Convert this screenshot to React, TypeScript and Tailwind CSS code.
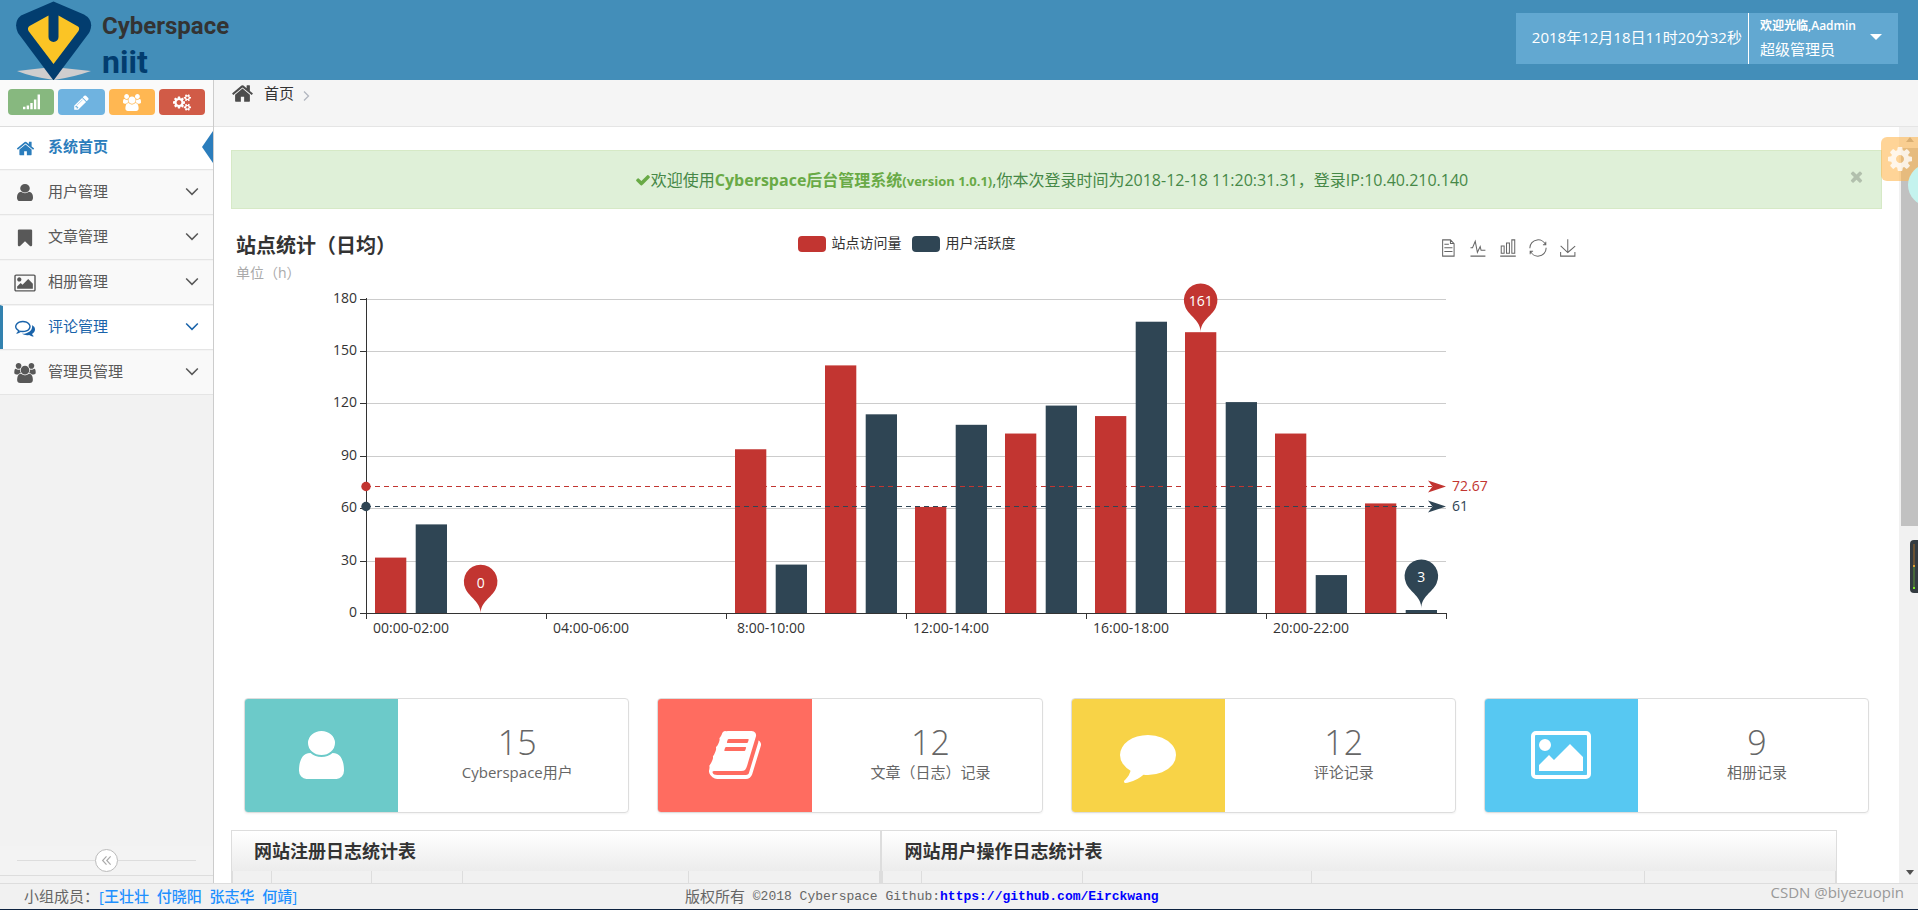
import React from "react";

type IconProps = { className?: string; d: string; box?: string; stretch?: boolean };

function Icon({ className, d, box = "0 0 1792 1792", stretch = false }: IconProps) {
  return (
    <svg viewBox={box} className={className} fill="currentColor" preserveAspectRatio={stretch ? "none" : undefined} aria-hidden="true">
      <path d={d} />
    </svg>
  );
}

const WIDE = "-64 0 1920 1792";
const TIGHT = "256 128 1280 1536";

const home =
  "M1472 992v480q0 26-19 45t-45 19h-384v-384h-256v384h-384q-26 0-45-19t-19-45v-480q0-1 .5-3t.5-3l575-474 575 474q1 2 1 6zm223-69l-62 74q-8 9-21 11h-3q-13 0-21-7l-692-577-692 577q-12 8-24 7-13-2-21-11l-62-74q-8-10-7-23.5t11-21.5l719-599q32-26 76-26t76 26l244 204v-195q0-14 9-23t23-9h192q14 0 23 9t9 23v408l219 182q10 8 11 21.5t-7 23.5z";
const user =
  "M1536 1399q0 109-62.5 187t-150.5 78h-854q-88 0-150.5-78t-62.5-187q0-85 8.5-160.5t31.5-152 58.5-131 94-89 134.5-34.5q131 128 313 128t313-128q76 0 134.5 34.5t94 89 58.5 131 31.5 152 8.5 160.5zm-256-887q0 159-112.5 271.5t-271.5 112.5-271.5-112.5-112.5-271.5 112.5-271.5 271.5-112.5 271.5 112.5 112.5 271.5z";
const bookmark =
  "M1420 128q23 0 44 9 33 13 52.5 41t19.5 62v1289q0 34-19.5 62t-52.5 41q-19 8-44 8-48 0-83-32l-441-424-441 424q-36 33-83 33-23 0-44-9-33-13-52.5-41t-19.5-62v-1289q0-34 19.5-62t52.5-41q21-9 44-9h1048z";
const picture =
  "M576 576q0 80-56 136t-136 56-136-56-56-136 56-136 136-56 136 56 56 136zm1024 384v448h-1408v-192l320-320 160 160 512-512zm96-704h-1600q-13 0-22.5 9.5t-9.5 22.5v1216q0 13 9.5 22.5t22.5 9.5h1600q13 0 22.5-9.5t9.5-22.5v-1216q0-13-9.5-22.5t-22.5-9.5zm160 32v1216q0 66-47 113t-113 47h-1600q-66 0-113-47t-47-113v-1216q0-66 47-113t113-47h1600q66 0 113 47t47 113z";
const comments =
  "M704 384q-153 0-286 52t-211.5 141-78.5 191q0 82 53 158t149 132l97 56-35 84q34-20 62-39l44-31 53 10q78 14 153 14 153 0 286-52t211.5-141 78.5-191-78.5-191-211.5-141-286-52zm0-128q191 0 353.5 68.5t256.5 186.5 94 257-94 257-256.5 186.5-353.5 68.5q-86 0-176-16-124 88-278 128-36 9-86 16h-3q-11 0-20.5-8t-11.5-21q-1-3-1-6.5t.5-6.5 2-6l2.5-5 3.5-5.5 4-5 4.5-5 4-4.5q5-6 23-25t26-29.5 22.5-29 25-38.5 20.5-44q-124-72-195-177t-71-224q0-139 94-257t256.5-186.5 353.5-68.5zm822 1169q10 24 20.5 44t25 38.5 22.5 29 26 29.5 23 25q1 1 4 4.5t4.5 5 4 5 3.5 5.5l2.5 5 2 6 .5 6.5-1 6.5q-3 14-13 22t-22 7q-50-7-86-16-154-40-278-128-90 16-176 16-271 0-472-132 58 4 88 4 161 0 309-45t264-129q125-92 192-212t67-254q0-77-23-152 129 71 204 178t75 230q0 120-71 224.5t-195 176.5z";
const group =
  "M529 896q-162 5-265 128h-134q-82 0-138-40.5t-56-118.5q0-353 124-353 6 0 43.5 21t97.5 42.5 119 21.5q67 0 133-23-5 37-5 66 0 139 81 256zm1071 637q0 120-73 189.5t-194 69.5h-874q-121 0-194-69.5t-73-189.5q0-53 3.5-103.5t14-109 26.5-108.5 43-97.5 62-81 85.5-53.5 111.5-20q10 0 43 21.5t73 48 107 48 135 21.5 135-21.5 107-48 73-48 43-21.5q61 0 111.5 20t85.5 53.5 62 81 43 97.5 26.5 108.5 14 109 3.5 103.5zm-1024-1277q0 106-75 181t-181 75-181-75-75-181 75-181 181-75 181 75 75 181zm704 384q0 159-112.5 271.5t-271.5 112.5-271.5-112.5-112.5-271.5 112.5-271.5 271.5-112.5 271.5 112.5 112.5 271.5zm576 225q0 78-56 118.5t-138 40.5h-134q-103-123-265-128 81-117 81-256 0-29-5-66 66 23 133 23 59 0 119-21.5t97.5-42.5 43.5-21q124 0 124 353zm-128-609q0 106-75 181t-181 75-181-75-75-181 75-181 181-75 181 75 75 181z";
const pencil =
  "M491 1536l91-91-235-235-91 91v107h128v128h107zm523-928q0-22-22-22-10 0-17 7l-542 542q-7 7-7 17 0 22 22 22 10 0 17-7l542-542q7-7 7-17zm-54-192l416 416-832 832h-416v-416zm683 96q0 53-37 90l-166 166-416-416 166-165q36-38 90-38 53 0 91 38l235 234q37 39 37 91z";
const cogs =
  "M896 896q0-106-75-181t-181-75-181 75-75 181 75 181 181 75 181-75 75-181zm768 512q0-52-38-90t-90-38-90 38-38 90q0 53 37.5 90.5t90.5 37.5 90.5-37.5 37.5-90.5zm0-1024q0-52-38-90t-90-38-90 38-38 90q0 53 37.5 90.5t90.5 37.5 90.5-37.5 37.5-90.5zm-384 421v185q0 10-7 19.5t-16 10.5l-155 24q-11 35-32 76 34 48 90 115 7 11 7 20 0 12-7 19-23 30-82.5 89.5t-78.5 59.5q-11 0-21-7l-115-90q-37 19-77 31-11 108-23 155-7 24-30 24h-186q-11 0-20-7.5t-10-17.5l-23-153q-34-10-75-31l-118 89q-7 7-20 7-11 0-21-8-144-133-144-160 0-9 7-19 10-14 41-53t47-61q-23-44-35-82l-152-24q-10-1-17-9.5t-7-19.5v-185q0-10 7-19.5t16-10.5l155-24q11-35 32-76-34-48-90-115-7-11-7-20 0-12 7-20 22-30 82-89t79-59q11 0 21 7l115 90q34-18 77-32 11-108 23-154 7-24 30-24h186q11 0 20 7.5t10 17.5l23 153q34 10 75 31l118-89q8-7 20-7 11 0 21 8 144 133 144 160 0 8-7 19-12 16-42 54t-45 60q23 48 34 82l152 23q10 2 17 10.5t7 19.5zm640 533v140q0 16-149 31-12 27-30 52 51 113 51 138 0 4-4 7-122 71-124 71-8 0-46-47t-52-68q-20 2-30 2t-30-2q-14 21-52 68t-46 47q-2 0-124-71-4-3-4-7 0-25 51-138-18-25-30-52-149-15-149-31v-140q0-16 149-31 13-29 30-52-51-113-51-138 0-4 4-7 4-2 35-20t59-34 30-16q8 0 46 46.5t52 67.5q20-2 30-2t30 2q51-71 92-112l6-2q4 0 124 70 4 3 4 7 0 25-51 138 17 23 30 52 149 15 149 31zm0-1024v140q0 16-149 31-12 27-30 52 51 113 51 138 0 4-4 7-122 71-124 71-8 0-46-47t-52-68q-20 2-30 2t-30-2q-14 21-52 68t-46 47q-2 0-124-71-4-3-4-7 0-25 51-138-18-25-30-52-149-15-149-31v-140q0-16 149-31 13-29 30-52-51-113-51-138 0-4 4-7 4-2 35-20t59-34 30-16q8 0 46 46.5t52 67.5q20-2 30-2t30 2q51-71 92-112l6-2q4 0 124 70 4 3 4 7 0 25-51 138 17 23 30 52 149 15 149 31z";
const cog =
  "M1152 896q0-106-75-181t-181-75-181 75-75 181 75 181 181 75 181-75 75-181zm512-109v222q0 12-8 23t-20 13l-185 28q-19 54-39 91 35 50 107 138 10 12 10 25t-9 23q-27 37-99 108t-94 71q-12 0-26-9l-138-108q-44 23-91 38-16 136-29 186-7 28-36 28h-222q-14 0-24.5-8.5t-11.5-21.5l-28-184q-49-16-90-37l-141 107q-10 9-25 9-14 0-25-11-126-114-165-168-7-10-7-23 0-12 8-23 15-21 51-66.5t54-70.5q-27-50-41-99l-183-27q-13-2-21-12.5t-8-23.5v-222q0-12 8-23t19-13l186-28q14-46 39-92-40-57-107-138-10-12-10-24 0-10 9-23 26-36 98.5-107.5t94.5-71.5q13 0 26 10l138 107q44-23 91-38 16-136 29-186 7-28 36-28h222q14 0 24.5 8.5t11.5 21.5l28 184q49 16 90 37l142-107q9-9 24-9 13 0 25 10 129 119 165 170 7 8 7 22 0 12-8 23-15 21-51 66.5t-54 70.5q26 50 41 98l183 28q13 2 21 12.5t8 23.5z";
const book =
  "M1703 478q40 57 18 129l-275 906q-19 64-76.5 107.5t-122.5 43.5h-923q-77 0-148.5-53.5t-99.5-131.5q-24-67-2-127 0-4 3-27t4-37q1-8-3-21.5t-3-19.5q2-11 8-21t16.5-23.5 16.5-23.5q23-38 45-91.5t30-91.5q3-10 .5-30t-.5-28q3-11 17-28t17-23q21-36 42-92t25-90q1-9-2.5-32t.5-28q4-13 22-30.5t22-22.5q19-26 42.5-84.5t27.5-96.5q1-8-3-25.5t-2-26.5q2-8 9-18t18-23 17-21q8-12 16.5-30.5t15-35 16-36 19.5-32 26.5-23.5 36-11.5 47.5 5.5l-1 3q38-9 51-9h761q74 0 114 56t18 130l-274 906q-36 119-71.5 153.5t-128.5 34.5h-869q-27 0-38 15-11 16-1 43 24 70 144 70h923q29 0 56-15.5t35-41.5l300-987q7-22 5-57 38 15 59 43zm-1064 2q-4 13 2 22.5t20 9.5h608q13 0 25.5-9.5t16.5-22.5l21-64q4-13-2-22.5t-20-9.5h-608q-13 0-25.5 9.5t-16.5 22.5zm-83 256q-4 13 2 22.5t20 9.5h608q13 0 25.5-9.5t16.5-22.5l21-64q4-13-2-22.5t-20-9.5h-608q-13 0-25.5 9.5t-16.5 22.5z";
const comment =
  "M1792 896q0 174-120 321.5t-326 233-450 85.5q-70 0-145-8-198 175-460 242-49 14-114 22-17 2-30.5-9t-17.5-29v-1q-3-4-.5-12t2-10 4.5-9.5l6-9 7-8.5 8-9q7-8 31-34.5t34.5-38 31-39.5 32.5-51 27-59 26-76q-157-89-247.5-220t-90.5-281q0-130 71-248.5t191-204.5 286-136.5 348-50.5q244 0 450 85.5t326 233 120 321.5z";
const check =
  "M1671 566q0 40-28 68l-724 724-136 136q-28 28-68 28t-68-28l-136-136-362-362q-28-28-28-68t28-68l136-136q28-28 68-28t68 28l294 295 656-657q28-28 68-28t68 28l136 136q28 28 28 68z";
const times =
  "M1490 1322q0 40-28 68l-136 136q-28 28-68 28t-68-28l-294-294-294 294q-28 28-68 28t-68-28l-136-136q-28-28-28-68t28-68l294-294-294-294q-28-28-28-68t28-68l136-136q28-28 68-28t68 28l294 294 294-294q28-28 68-28t68 28l136 136q28 28 28 68t-28 68l-294 294 294 294q28 28 28 68z";
const signal =
  "M0 1344h256v256h-256zM384 1216h256v384h-256zM768 960h256v640h-256zM1152 576h256v1024h-256zM1536 64h256v1536h-256z";

function Angle({ className, d }: { className: string; d: string }) {
  return (
    <svg viewBox="0 0 12 12" className={className} fill="none" stroke="currentColor" strokeWidth="1.3" aria-hidden="true">
      <path d={d} />
    </svg>
  );
}

function Logo() {
  return (
    <a href="#" className="flex gap-2.5 pl-4">
      <svg viewBox="16 0 76 80" className="h-20 w-[76px]" aria-hidden="true">
        <path d="M17 71 Q34 69 53 67 Q72 69 91 71 Q74 77 54 80 Q32 77 17 71Z" fill="#cfcdce" />
        <path d="M53.500 1.500 L84 14.500 Q94 20 90 31 L89 33 L53.500 80.500 L18 33 Q13 22 21 15.500Z" fill="#023d6f" />
        <path d="M48.500 15.500 L29.500 26 Q27 28 28.500 31 L53.500 64 L78.500 31 Q80 28 78 26.500 L58.500 15.500 V37 A5 5 0 0 1 48.500 37Z" fill="#fbc425" />
      </svg>
      <span className="flex flex-col pt-3 font-['Roboto',sans-serif] font-bold">
        <span className="text-2xl leading-7 text-[#333]">Cyberspace</span>
        <span className="text-[32px] leading-[44px] text-[#023d6f]">niit</span>
      </span>
    </a>
  );
}

function Header() {
  return (
    <header className="flex h-20 shrink-0 items-start justify-between bg-[#438eb9] pr-5">
      <Logo />
      <div className="mt-[13px] flex h-[51px] bg-[#62a8d1] text-white">
        <time className="flex items-center pr-1.5 pb-0.5 pl-4 text-[15px]">2018年12月18日11时20分32秒</time>
        <button type="button" className="flex items-center gap-3.5 border-l border-white pr-4 pl-[11px] text-left">
          <span className="flex flex-col pb-1">
            <span className="text-xs leading-6 font-semibold">欢迎光临,Aadmin</span>
            <span className="text-[15px] leading-[22px]">超级管理员</span>
          </span>
          <svg viewBox="0 0 12 6" className="mb-1 h-[6px] w-3" fill="currentColor" aria-hidden="true">
            <path d="M0 0h12L6 6z" />
          </svg>
        </button>
      </div>
    </header>
  );
}

const menu = [
  { label: "用户管理", icon: <Icon d={user} box={TIGHT} stretch className="h-[17px] w-4" /> },
  { label: "文章管理", icon: <Icon d={bookmark} className="size-5" /> },
  { label: "相册管理", icon: <Icon d={picture} box={WIDE} className="h-5 w-[22px]" /> },
  { label: "评论管理", icon: <Icon d={comments} className="size-5" />, hover: true },
  { label: "管理员管理", icon: <Icon d={group} box={WIDE} className="h-5 w-[22px]" /> },
];

function Sidebar() {
  return (
    <aside className="flex w-[214px] shrink-0 flex-col border-r border-[#ccc] bg-[#f2f2f2]">
      <div className="flex h-[47px] shrink-0 items-start gap-1 border-b border-[#ddd] bg-[#fafafa] px-2 pt-[9px] text-white">
        <button type="button" aria-label="统计" className="flex h-[26px] flex-1 items-center justify-center rounded bg-[#87b87f]">
          <Icon d={signal} className="size-[17px]" />
        </button>
        <button type="button" aria-label="编辑" className="flex h-[26px] flex-1 items-center justify-center rounded bg-[#6fb3e0]">
          <Icon d={pencil} className="size-[17px]" />
        </button>
        <button type="button" aria-label="用户" className="flex h-[26px] flex-1 items-center justify-center rounded bg-[#ffb752]">
          <Icon d={group} box={WIDE} className="h-[17px] w-[18px]" />
        </button>
        <button type="button" aria-label="设置" className="flex h-[26px] flex-1 items-center justify-center rounded bg-[#d15b47]">
          <Icon d={cogs} box="0 0 1920 1792" className="h-[17px] w-[18px]" />
        </button>
      </div>
      <nav>
        <ul className="text-[15px]">
          <li className="border-b border-[#e5e5e5] bg-white">
            <a href="#" className="relative flex h-[42px] items-center pl-3.5 font-bold text-[#2b7dbc]">
              <span className="flex w-[22px] justify-center">
                <Icon d={home} className="size-[19px]" />
              </span>
              <span className="ml-3 pb-1">系统首页</span>
              <svg viewBox="0 0 11 32" className="absolute top-1 right-0 h-8 w-[11px]" fill="#2b7dbc" aria-hidden="true">
                <path d="M11 0v32L0 16z" />
              </svg>
            </a>
          </li>
          {menu.map((m) => (
            <li key={m.label} className={m.hover ? "border-b border-[#e5e5e5] bg-white" : "border-b border-[#e5e5e5] bg-[#f9f9f9]"}>
              <a
                href="#"
                className={
                  m.hover
                    ? "flex h-11 items-center border-t border-l-[3px] border-t-[#f4f4f4] border-l-[#3382af] pr-3.5 pl-[11px] text-[#1963aa]"
                    : "flex h-11 items-center border-t border-[#f4f4f4] pr-3.5 pl-3.5 text-[#585858]"
                }
              >
                <span className="flex w-[22px] justify-center">{m.icon}</span>
                <span className="ml-3 flex-1 pb-0.5">{m.label}</span>
                <Angle d="M1 3l5 5 5-5" className="mb-0.5 size-3.5" />
              </a>
            </li>
          ))}
        </ul>
      </nav>
      <div className="mt-auto flex h-[30px] items-center border-b border-[#ddd] bg-[#f3f3f3] px-[17px]">
        <span className="h-px flex-1 bg-[#ddd]" />
        <button type="button" aria-label="收起菜单" className="flex size-[23px] items-center justify-center rounded-full border border-[#bbb] bg-white text-[#aaa]">
          <Angle d="M6 1.500L1.800 6 6 10.500M10.500 1.500L6.300 6l4.200 4.500" className="size-[11px]" />
        </button>
        <span className="h-px flex-1 bg-[#ddd]" />
      </div>
      <div className="h-[7px] shrink-0" />
    </aside>
  );
}

const visits = [32, 0, 0, 0, 94, 142, 61, 103, 113, 161, 103, 63];
const active = [51, 0, 0, 0, 28, 114, 108, 119, 167, 121, 22, 2];
const periods = ["00:00-02:00", "04:00-06:00", "8:00-10:00", "12:00-14:00", "16:00-18:00", "20:00-22:00"];
const RED = "#c23531";
const NAVY = "#2f4554";

const LEFT = 135;
const RIGHT = 1215;
const BASE = 330.5;
const UNIT = 314.5 / 180;
const STEP = 90;
const BAR = 31.3;
const barX = (i: number, s: number) => LEFT + STEP * i + 9 + s * (BAR + 9.4);
const yOf = (v: number) => BASE - v * UNIT;
const lineY = (v: number) => Math.floor(yOf(v)) + 0.5;

function Pin({ x, y, color, label }: { x: number; y: number; color: string; label: string }) {
  return (
    <g transform={`translate(${x} ${y})`}>
      <path d="M-15.180 -24.800A16.800 16.800 0 1 1 15.180 -24.800C10.860 -15.700 0 -11.760 0 0C0 -11.760 -10.860 -15.700 -15.180 -24.800Z" fill={color} />
      <text y="-26" textAnchor="middle" fill="#fff">
        {label}
      </text>
    </g>
  );
}

function AverageLine({ value, color, label }: { value: number; color: string; label: string }) {
  const y = lineY(value);
  return (
    <g>
      <line x1={LEFT} x2={RIGHT - 14} y1={y} y2={y} stroke={color} strokeDasharray="5 4" />
      <circle cx={LEFT} cy={y} r="4.700" fill={color} />
      <path d={`M${RIGHT} ${y}l-18 -6 4.500 6 -4.500 6z`} fill={color} />
      <text x={RIGHT + 6} y={y + 4} fill={color}>
        {label}
      </text>
    </g>
  );
}

const tools = [
  { name: "数据视图", d: "M17.5,17.3H33M45.4,29.5h-28M11.5,2v56H51V14.8L38.4,2H11.5zM38.4,2.2v12.7H51M45.4,41.7h-28" },
  { name: "切换为折线图", d: "M4.1,28.9h7.1l9.3-22l7.4,38l9.7-19.7l3,12.8h14.9M4.1,58h51.4" },
  { name: "切换为柱状图", d: "M6.7,22.9h10V48h-10V22.9zM24.9,13h10v35h-10V13zM43.2,2h10v46h-10V2zM3.1,58h53.7" },
  { name: "还原", d: "M47,18.9h9.8V8.7M56.3,20.1C52.1,9,40.5,0.6,26.8,2.1C12.6,3.7,1.6,16.2,2.1,30.6M13,41.1H3.1v10.2M3.7,39.9c4.2,11.1,15.8,19.5,29.5,18c14.2-1.6,25.2-14.1,24.7-28.5" },
  { name: "保存为图片", d: "M4.7,22.9L29.3,45.5L54.7,23.4M4.6,43.6L4.6,58L53.8,58L53.8,43.6M29.2,45.1L29.2,0" },
];

function Chart() {
  return (
    <section className="w-full max-w-[1350px]">
      <div className="grid grid-cols-[1fr_auto_1fr] items-start pt-[23px] pr-1 pl-[5px]">
        <div>
          <h2 className="text-xl leading-7 font-bold text-[#333]">站点统计（日均）</h2>
          <p className="mt-[3px] text-sm leading-5 text-[#aaa]">单位（h）</p>
        </div>
        <div className="flex gap-2.5 text-sm leading-[22px] text-[#333]">
          <button type="button" className="flex items-center gap-1.5">
            <span className="mt-0.5 h-4 w-[28px] rounded bg-[#c23531]" />
            站点访问量
          </button>
          <button type="button" className="flex items-center gap-1.5">
            <span className="mt-0.5 h-4 w-[28px] rounded bg-[#2f4554]" />
            用户活跃度
          </button>
        </div>
        <div className="flex justify-end gap-3 pt-[7px]">
          {tools.map((t) => (
            <button key={t.name} type="button" aria-label={t.name}>
              <svg viewBox="-1 -1 62 62" className="size-[18px]" fill="none" stroke="#666" strokeWidth="3.500" aria-hidden="true">
                <path d={t.d} />
              </svg>
            </button>
          ))}
        </div>
      </div>
      <svg viewBox="0 0 1350 360" className="block w-full overflow-visible text-[14px]" fill="#333" role="img" aria-label="站点统计（日均）">
        {[0, 30, 60, 90, 120, 150, 180].map((v) => (
          <g key={v}>
            {v > 0 && <line x1={LEFT} x2={RIGHT} y1={lineY(v)} y2={lineY(v)} stroke="#ccc" />}
            <line x1={LEFT - 6} x2={LEFT} y1={lineY(v)} y2={lineY(v)} stroke="#333" />
            <text x={LEFT - 9} y={lineY(v) + 3} textAnchor="end">
              {v}
            </text>
          </g>
        ))}
        {visits.map((v, i) => (
          <rect key={i} x={barX(i, 0)} y={yOf(v)} width={BAR} height={v * UNIT} fill={RED} />
        ))}
        {active.map((v, i) => (
          <rect key={i} x={barX(i, 1)} y={yOf(v)} width={BAR} height={v * UNIT} fill={NAVY} />
        ))}
        <line x1={LEFT + 0.5} x2={LEFT + 0.5} y1="15" y2="331" stroke="#333" />
        <line x1={LEFT} x2={RIGHT + 1} y1={lineY(0)} y2={lineY(0)} stroke="#333" />
        {[0, 1, 2, 3, 4, 5, 6].map((t) => (
          <line key={t} x1={LEFT + 180 * t + 0.5} x2={LEFT + 180 * t + 0.5} y1="331" y2="336" stroke="#333" />
        ))}
        {periods.map((p, i) => (
          <text key={p} x={LEFT + 45 + 180 * i} y="350" textAnchor="middle">
            {p}
          </text>
        ))}
        <AverageLine value={72.67} color={RED} label="72.67" />
        <AverageLine value={61} color={NAVY} label="61" />
        <Pin x={barX(9, 0) + BAR / 2} y={yOf(161)} color={RED} label="161" />
        <Pin x={barX(1, 0) + BAR / 2} y={yOf(0)} color={RED} label="0" />
        <Pin x={barX(11, 1) + BAR / 2} y={yOf(3)} color={NAVY} label="3" />
      </svg>
    </section>
  );
}

const cards = [
  { value: 15, label: "Cyberspace用户", tone: "bg-[#6ccac9]", icon: <Icon d={user} box={TIGHT} stretch className="h-12 w-[45px]" /> },
  { value: 12, label: "文章（日志）记录", tone: "bg-[#ff6c60]", icon: <Icon d={book} className="size-14" /> },
  { value: 12, label: "评论记录", tone: "bg-[#f8d347]", icon: <Icon d={comment} className="size-14" /> },
  { value: 9, label: "相册记录", tone: "bg-[#57c8f2]", icon: <Icon d={picture} box={WIDE} className="h-14 w-[60px]" /> },
];

const panels = [
  { title: "网站注册日志统计表", box: "w-[40.5%]", cols: ["w-[6%]", "w-[15.5%]", "w-[14%]", "w-[35%]", "w-[29.5%]"] },
  { title: "网站用户操作日志统计表", box: "flex-1", cols: ["w-[4%]", "w-[17%]", "w-[24%]", "w-[35%]", "w-[20%]"] },
];

function Content() {
  return (
    <div className="min-w-0 flex-1 overflow-hidden bg-white px-[17px] pt-[23px]">
      <div role="alert" className="relative flex h-[59px] items-center justify-center border border-[#d6e9c6] bg-[#dff0d8] text-[#468847]">
        <p className="flex items-center pr-2.5 text-base">
          <Icon d={check} className="size-4 text-[#69aa46]" />
          <span>欢迎使用</span>
          <strong className="font-bold text-[#69aa46]">
            Cyberspace后台管理系统<small className="text-[13px]">(version 1.0.1)</small>
          </strong>
          <span>,你本次登录时间为2018-12-18 11:20:31.31，登录IP:10.40.210.140</span>
        </p>
        <button type="button" aria-label="关闭" className="absolute top-[17px] right-4 text-[#b2c0ad]">
          <Icon d={times} className="size-[17px]" />
        </button>
      </div>
      <Chart />
      <div className="mt-[55px] grid grid-cols-4 gap-7 px-[13px]">
        {cards.map((c) => (
          <section key={c.label} className="flex h-[115px] overflow-hidden rounded border border-[#ddd] shadow-xs">
            <div className={`flex w-2/5 items-center justify-center pb-0.5 text-white ${c.tone}`}>{c.icon}</div>
            <div className="flex w-3/5 flex-col items-center pt-[23px] pl-2 text-[#666]">
              <strong className="text-[34px] leading-10 font-light">{c.value}</strong>
              <p className="text-[15px] leading-5">{c.label}</p>
            </div>
          </section>
        ))}
      </div>
      <div className="mt-[17px] mr-[45px] flex">
        {panels.map((p) => (
          <section key={p.title} className={`border border-[#ddd] ${p.box}`}>
            <h3 className="flex h-10 items-center bg-linear-to-b from-white to-[#ececec] pl-[22px] text-lg font-bold text-[#333]">{p.title}</h3>
            <table className="w-full table-fixed border-collapse bg-[#f1f1f1]" aria-label={p.title}>
              <thead>
                <tr className="h-9">
                  {p.cols.map((w, i) => (
                    <th key={i} className={`border-x border-[#ddd] ${w}`} />
                  ))}
                </tr>
              </thead>
            </table>
          </section>
        ))}
      </div>
    </div>
  );
}

function Scrollbar() {
  return (
    <div className="relative flex w-[19px] shrink-0 flex-col items-end bg-[#f1f1f1]" aria-hidden="true">
      <span className="flex h-[21px] w-[17px] items-center justify-center">
        <svg viewBox="0 0 8 5" className="mt-1 h-[5px] w-2.5" fill="#a3a3a3">
          <path d="M0 5h8L4 0z" />
        </svg>
      </span>
      <span className="h-1/2 w-[17px] bg-[#c1c1c1]" />
      <span className="mt-auto flex h-[21px] w-[17px] items-center justify-center">
        <svg viewBox="0 0 8 5" className="h-[5px] w-2.5" fill="#505050">
          <path d="M0 0h8L4 5z" />
        </svg>
      </span>
    </div>
  );
}

export default function App() {
  return (
    <div className="relative flex h-screen flex-col overflow-hidden bg-white font-['Open_Sans','Noto_Sans_CJK_SC',sans-serif]">
      <Header />
      <div className="flex min-h-0 flex-1">
        <Sidebar />
        <main className="flex min-w-0 flex-1 flex-col">
          <nav aria-label="breadcrumb" className="flex h-[47px] shrink-0 items-start border-b border-[#e5e5e5] bg-[#f5f5f5] pt-0.5 pl-[17px] text-[15px] leading-[22px] text-[#333]">
            <Icon d={home} className="size-[23px] text-[#4c4c4c]" />
            <a href="#" className="ml-2.5">
              首页
            </a>
            <Angle d="M4 1.500L8.500 6 4 10.500" className="mt-2 ml-1.5 size-3 text-[#b2b6bf]" />
          </nav>
          <div className="flex min-h-0 flex-1">
            <Content />
            <Scrollbar />
          </div>
        </main>
      </div>
      <footer className="flex h-[27px] shrink-0 items-center border-t border-b border-t-[#ddd] border-b-[#0d2240] bg-[#f1f1f1] text-[15px] text-[#666]">
        <p className="w-[685px] pl-6">
          小组成员：
          <span className="font-medium whitespace-pre text-[#1e90ff]">[王壮壮  付晓阳  张志华  何靖]</span>
        </p>
        <p className="flex items-center">
          <span>版权所有</span>
          <span className="font-['Liberation_Mono',monospace] text-[13px] whitespace-pre">
            {" ©2018 Cyberspace Github:"}
            <a href="https://github.com/Eirckwang" className="font-bold text-[#0000ff]">
              https://github.com/Eirckwang
            </a>
          </span>
        </p>
      </footer>

      <span className="absolute right-3.5 bottom-1.5 text-[15px] leading-6 text-[#999]">CSDN @biyezuopin</span>
      <button type="button" aria-label="主题设置" className="absolute top-[137px] right-0 flex h-11 w-[37px] items-center justify-center rounded-l-md bg-[#ffb752]/60 text-white/80">
        <Icon d={cog} className="size-7" />
      </button>
      <span className="absolute top-[164px] -right-8 size-[42px] rounded-full bg-[#c4f3ee]" />
      <span className="absolute top-[540px] right-0 flex h-[53px] w-2 flex-col items-center rounded-l-sm bg-[#343c41] py-1">
        <span className="w-0.5 flex-1 bg-[#6a5233]" />
        <span className="h-0.5 w-0.5 bg-[#e0a030]" />
        <span className="w-0.5 flex-1 bg-[#47683a]" />
        <span className="h-0.5 w-0.5 bg-[#7bea20]" />
      </span>
    </div>
  );
}
